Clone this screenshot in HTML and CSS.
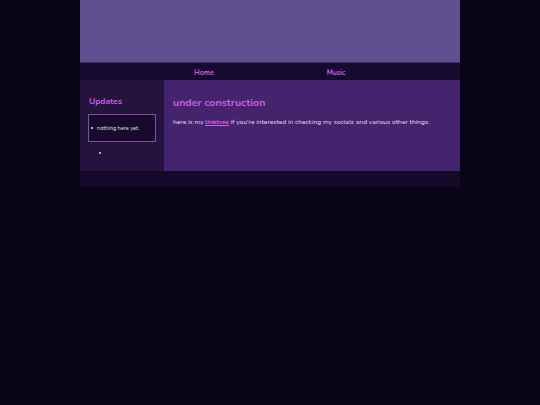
FILE: index.html
```html
<!DOCTYPE html>
<html>
<head>
<meta charset="utf-8">
<link rel="stylesheet" href="styles.css">
</head>
<body>
<div class="wrap">
  <header class="banner"></header>
  <nav class="nav">
    <a href="#">Home</a>
    <a href="#">Music</a>
  </nav>
  <div class="cols">
    <aside class="side">
      <h2>Updates</h2>
      <div class="box">
        <ul class="list"><li>nothing here yet.</li></ul>
      </div>
      <ul class="list stray"><li></li></ul>
    </aside>
    <main class="main">
      <h1>under construction</h1>
      <p>here is my <a href="#">linktree</a> if you're interested in checking my socials and various other things.</p>
    </main>
  </div>
  <footer class="foot"></footer>
</div>
</body>
</html>
```
FILE: styles.css
```css
html, body { margin: 0; padding: 0; }
body {
  background: #0a0418;
  font-family: "Nunito", "Lato", "Noto Sans", sans-serif;
  color: #e6ddf2;
}
.wrap { width: 380px; margin: 0 auto; }
.banner {
  height: 62px;
  background: #5e5090;
  border-bottom: 1px solid #3a2d62;
}
.nav {
  height: 17px;
  box-sizing: border-box;
  background: #150b2f;
  display: flex;
  align-items: center;
  padding: 2px 58px 0 58px;
  font-size: 7px;
  font-weight: bold;
}
.nav a {
  flex: 1;
  text-align: center;
  color: #c85ee2;
  text-decoration: none;
}
.cols { display: flex; }
.side {
  width: 84px;
  background: #24123f;
  padding: 15px 8px 0 8px;
  box-sizing: border-box;
  height: 91px;
}
.side h2 {
  margin: 0 0 7px 1px;
  font-size: 8.5px;
  color: #c760e4;
  font-weight: bold;
}
.box {
  background: #150b2d;
  border: 1px solid #8c4aa4;
  height: 26px;
  display: flex;
  align-items: center;
}
.list {
  margin: 0;
  padding: 0 0 0 2px;
  list-style: none;
  font-size: 5.6px;
  color: #e6ddf2;
}
.list li {
  display: flex;
  align-items: center;
  gap: 4px;
}
.list li::before {
  content: "";
  width: 2px;
  height: 2px;
  border-radius: 50%;
  background: #e6ddf2;
  flex: none;
}
.stray {
  margin-top: 9px;
  padding-left: 11px;
}
.stray li { height: 4px; }
.main {
  flex: 1;
  background: #44246d;
  padding: 15px 8px 0 9px;
  height: 91px;
  box-sizing: border-box;
}
.main h1 {
  margin: 0 0 7px 0;
  font-size: 10.6px;
  color: #c860e4;
  font-weight: bold;
}
.main p { margin: 0; font-size: 6.7px; color: #e4dcf0; }
.main a { color: #d060e6; font-weight: bold; }
.foot { height: 16px; background: #130a2a; }
```
